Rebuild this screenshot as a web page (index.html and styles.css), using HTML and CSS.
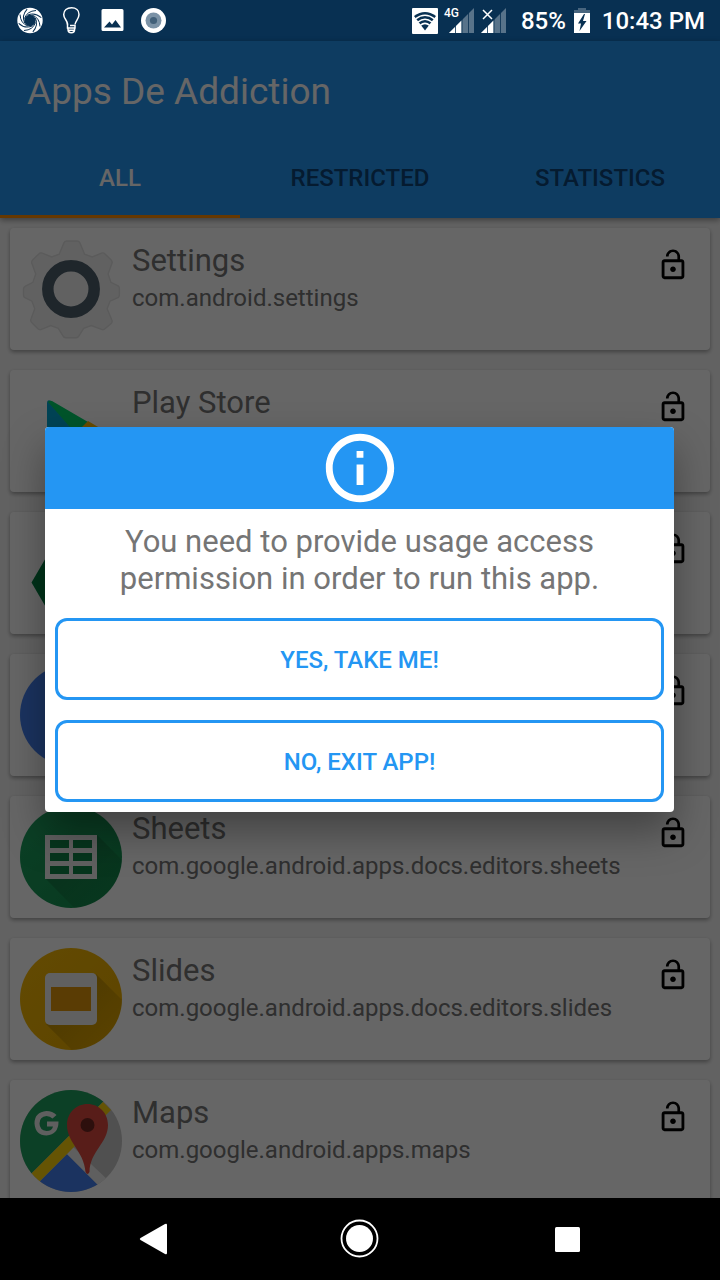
FILE: index.html
```html
<!DOCTYPE html>
<html lang="en">
<head>
<meta charset="utf-8">
<meta name="viewport" content="width=device-width, initial-scale=1">
<title>Apps De Addiction</title>
<link rel="stylesheet" href="styles.css">
</head>
<body>
<div class="phone">
  <div class="status">
    <div class="status-left">
      <svg class="status-icon" viewBox="0 0 28 28" aria-hidden="true">
        <circle cx="14" cy="13.500" r="9.200" fill="none" stroke="#fff" stroke-width="7"/>
        <g fill="none" stroke="#083052" stroke-width="1" transform="translate(0 -.5)">
          <path id="blade" d="M8.500 12Q11 4.500 20 4"/>
          <use href="#blade" transform="rotate(45 14 14)"/>
          <use href="#blade" transform="rotate(90 14 14)"/>
          <use href="#blade" transform="rotate(135 14 14)"/>
          <use href="#blade" transform="rotate(180 14 14)"/>
          <use href="#blade" transform="rotate(225 14 14)"/>
          <use href="#blade" transform="rotate(270 14 14)"/>
          <use href="#blade" transform="rotate(315 14 14)"/>
        </g>
      </svg>
      <svg class="status-icon" viewBox="0 0 28 28" aria-hidden="true">
        <path d="M10.500 17.500C10.500 13 6.700 12 6.700 7.500C6.700 3 10 .8 14.500 .8S22 3.500 22 7.500C22 12 18.500 13.500 18 17.500" fill="none" stroke="#fff" stroke-width="1.500"/>
        <path d="M10.500 16.500V21H18V18.500H13M11 21v1.500q0 3.200 3.300 3.200t3.300-3.200V21M11 23.300h6.500" fill="none" stroke="#fff" stroke-width="1.500"/>
      </svg>
      <svg class="status-icon" viewBox="0 0 28 28" aria-hidden="true">
        <path fill="#fff" fill-rule="evenodd" d="M5 2h19q1.500 0 1.500 1.500v19q0 1.500-1.500 1.500H5q-1.500 0-1.500-1.500v-19Q3.500 2 5 2zM6 20.500h17l-5.500-7.500-3.500 4.500-2.500-3z"/>
      </svg>
      <svg class="status-icon" viewBox="0 0 28 28" aria-hidden="true">
        <circle cx="14.500" cy="13.500" r="12.500" fill="#fff"/>
        <circle cx="14.500" cy="13.500" r="8" fill="#7b92a6"/>
        <circle cx="14.500" cy="13.500" r="3.600" fill="#426079"/>
      </svg>
    </div>
    <div class="status-right">
      <svg class="wifi" viewBox="0 0 26 26" aria-hidden="true">
        <rect width="26" height="26" rx="1" fill="#fff"/>
        <path d="M2 8Q13 0 24 8L13 22.500z" fill="#083052"/>
        <path d="M3.500 10.800Q13 3.500 22.500 10.800M6 14Q13 8.500 20 14M8.500 17.200Q13 13.500 17.500 17.200" fill="none" stroke="#fff" stroke-width="1.500"/>
      </svg>
      <span class="signal signal-main">
        <svg viewBox="0 0 26 26" aria-hidden="true"><path d="M0 25L25 0V25z" fill="#58738a"/><path d="M0 25L12.500 12.500V25z" fill="#fff"/><path d="M6.500 17v8M13 10v15M19.500 5v20" stroke="#083052" stroke-width=".8"/></svg>
        <span class="signal-type">4G</span>
      </span>
      <span class="signal">
        <svg viewBox="0 0 26 26" aria-hidden="true"><path d="M0 25L25 0V25z" fill="#58738a"/><path d="M0 25L12.500 12.500V25z" fill="#fff"/><path d="M6.500 17v8M13 10v15M19.500 5v20" stroke="#083052" stroke-width=".8"/><path d="M2 2l9 9M11 2l-9 9" stroke="#fff" stroke-width="1.500"/></svg>
      </span>
      <span class="percent">85%</span>
      <svg class="battery" viewBox="0 0 16 26" aria-hidden="true">
        <path d="M4 0h8v2h4v4H0V2h4z" fill="#48657e"/>
        <path d="M0 5h16v20H0z" fill="#fff"/>
        <path d="M10 6L4 15.500h3L5.500 23 12.500 13H9l2-7z" fill="#083052"/>
      </svg>
      <span class="clock">10:43 PM</span>
    </div>
  </div>

  <main class="screen">
    <header class="appbar">
      <h1 class="app-title">Apps De Addiction</h1>
      <div class="tabs" role="tablist">
        <button class="tab tab-active" role="tab" aria-selected="true">ALL</button>
        <button class="tab" role="tab" aria-selected="false">RESTRICTED</button>
        <button class="tab" role="tab" aria-selected="false">STATISTICS</button>
      </div>
    </header>

    <ul class="apps">
      <li class="card">
        <svg class="app-icon" viewBox="0 0 102 102" aria-hidden="true">
          <g transform="translate(3.500 3) scale(.94)">
            <path d="M45 0h12q2 0 3 2l5 12 8 3 10-4q2-1 4 1l6 6q2 2 1 4l-4 11 3 9 8 4q1 1 1 3v6q0 2-1 3l-9 4-3 8 5 12q1 2-1 4l-6 5q-2 2-4 1l-11-4-8 3-5 8q-1 2-3 2H45q-2 0-3-2l-5-8-8-3-10 4q-2 1-4-1l-6-6q-2-2-1-4l4-11-3-8-8-4q-1-1-1-3v-6q0-2 2-3l8-4 3-9-4-11q-1-2 1-4l6-6q2-2 4-1l10 4 8-3 5-12q1-2 3-2z" fill="#f3f3f3" stroke="#e3e3e3" stroke-width="1.500"/>
          </g>
          <circle cx="51" cy="51" r="23.200" fill="#f3f3f3" stroke="#4f606d" stroke-width="11.500"/>
        </svg>
        <div class="info"><h2 class="name">Settings</h2><p class="package">com.android.settings</p></div>
        <button class="lock" aria-label="Restrict"><svg viewBox="0 0 24 24"><path id="lock-shape" d="M12 17c1.100 0 2-.9 2-2s-.9-2-2-2-2 .9-2 2 .9 2 2 2zm6-9h-1V6c0-2.760-2.240-5-5-5S7 3.240 7 6h1.900c0-1.710 1.390-3.100 3.100-3.100 1.710 0 3.100 1.390 3.100 3.100v2H6c-1.100 0-2 .9-2 2v10c0 1.100.9 2 2 2h12c1.100 0 2-.9 2-2V10c0-1.100-.9-2-2-2zm0 12H6V10h12v10z"/></svg></button>
      </li>
      <li class="card">
        <svg class="app-icon" viewBox="0 0 102 102" aria-hidden="true">
          <path d="M27 23q0-4 4-2L57 47 27 88z" fill="#00a9d4"/>
          <path d="M28 22q1-2 4-1L68 42 56 54z" fill="#00d26a"/>
          <path d="M68 41l22 13-22 13-12-14z" fill="#ffbc00"/>
          <path d="M27 86l29-33 12 14-37 21z" fill="#f04040"/>
        </svg>
        <div class="info"><h2 class="name">Play Store</h2></div>
        <button class="lock" aria-label="Restrict"><svg viewBox="0 0 24 24"><use href="#lock-shape"/></svg></button>
      </li>
      <li class="card">
        <svg class="app-icon" viewBox="0 0 102 102" aria-hidden="true">
          <path d="M11.500 60.500L31 27h40l20 33.500L71 94H31z" fill="#007f43"/>
        </svg>
        <div class="info"></div>
        <button class="lock" aria-label="Restrict"><svg viewBox="0 0 24 24"><use href="#lock-shape"/></svg></button>
      </li>
      <li class="card">
        <svg class="app-icon" viewBox="0 0 102 102" aria-hidden="true">
          <circle cx="51" cy="51" r="51" fill="#4580ef"/>
        </svg>
        <div class="info"></div>
        <button class="lock" aria-label="Restrict"><svg viewBox="0 0 24 24"><use href="#lock-shape"/></svg></button>
      </li>
      <li class="card">
        <svg class="app-icon" viewBox="0 0 102 102" aria-hidden="true">
          <defs>
            <linearGradient id="sheen-green" x1="0" y1="0" x2="1" y2="1"><stop offset="0" stop-color="#1fa160"/><stop offset="1" stop-color="#128f4e"/></linearGradient>
            <linearGradient id="sheen-yellow" x1="0" y1="0" x2="1" y2="1"><stop offset="0" stop-color="#f6b906"/><stop offset="1" stop-color="#e9ab00"/></linearGradient>
            <linearGradient id="fade" x1="0" y1="0" x2="1" y2="1"><stop offset=".3" stop-color="#000" stop-opacity=".16"/><stop offset=".9" stop-color="#000" stop-opacity="0"/></linearGradient>
            <clipPath id="disc"><circle cx="51" cy="51" r="51"/></clipPath>
          </defs>
          <circle cx="51" cy="51" r="51" fill="url(#sheen-green)"/>
          <path d="M77 29l40 40v48H69L26 73z" fill="url(#fade)" clip-path="url(#disc)"/>
          <path d="M25 29h52v44H25z" fill="#f1f1f1"/>
          <path d="M30 34h19v8H30zM53 34h19v8H53zM30 47h19v8H30zM53 47h19v8H53zM30 60h19v8H30zM53 60h19v8H53z" fill="#11854a"/>
        </svg>
        <div class="info"><h2 class="name">Sheets</h2><p class="package">com.google.android.apps.docs.editors.sheets</p></div>
        <button class="lock" aria-label="Restrict"><svg viewBox="0 0 24 24"><use href="#lock-shape"/></svg></button>
      </li>
      <li class="card">
        <svg class="app-icon" viewBox="0 0 102 102" aria-hidden="true">
          <circle cx="51" cy="51" r="51" fill="url(#sheen-yellow)"/>
          <path d="M76 26l41 41v50H67L26 76z" fill="url(#fade)" clip-path="url(#disc)"/>
          <rect x="25" y="25" width="52" height="52" rx="5" fill="#f1f1f1"/>
          <path d="M31 39h40v24H31z" fill="#e0960c"/>
        </svg>
        <div class="info"><h2 class="name">Slides</h2><p class="package">com.google.android.apps.docs.editors.slides</p></div>
        <button class="lock" aria-label="Restrict"><svg viewBox="0 0 24 24"><use href="#lock-shape"/></svg></button>
      </li>
      <li class="card">
        <svg class="app-icon" viewBox="0 0 102 102" aria-hidden="true">
          <g clip-path="url(#disc)">
            <path d="M0 0h102v102H0z" fill="#c8c8c8"/>
            <path d="M0 0h95L0 95z" fill="#1fa160"/>
            <path d="M47 64L88 105H6z" fill="#4580ef"/>
            <path d="M53 57L47 64 82 99l8-7z" fill="#eee"/>
            <path d="M8 87L83 12l8 8-75 75z" fill="#fdd20a"/>
          </g>
          <path d="M38.500 31.500H27v5h6q-1 4.500-6.500 4.500-7-1-7-7.500 0-7 7-7.500 3.500 0 6 2.500l4-3.500q-4-4-10-4-12 1-12 12.500 1 12 12 12 12-1 12-14z" fill="#eee"/>
          <path d="M67.500 14C79 14 88 23 88 35c0 18-18 26-18.500 47q-2 4-4 0C64 61 47 53 47 35c0-12 9-21 20.500-21z" fill="#dc4a3f"/>
          <circle cx="67.500" cy="35" r="7" fill="#702622"/>
        </svg>
        <div class="info"><h2 class="name">Maps</h2><p class="package">com.google.android.apps.maps</p></div>
        <button class="lock" aria-label="Restrict"><svg viewBox="0 0 24 24"><use href="#lock-shape"/></svg></button>
      </li>
    </ul>

    <div class="backdrop">
      <section class="dialog" role="dialog" aria-modal="true" aria-labelledby="message">
        <div class="dialog-head">
          <svg class="info-icon" viewBox="0 0 24 24" aria-hidden="true"><path fill="#fff" d="M11 7h2v2h-2zm0 4h2v6h-2zm1-9C6.480 2 2 6.480 2 12s4.480 10 10 10 10-4.480 10-10S17.520 2 12 2zm0 18c-4.410 0-8-3.590-8-8s3.590-8 8-8 8 3.590 8 8-3.590 8-8 8z"/></svg>
        </div>
        <p class="message" id="message">You need to provide usage access permission in order to run this app.</p>
        <div class="actions">
          <button class="action">YES, TAKE ME!</button>
          <button class="action">NO, EXIT APP!</button>
        </div>
      </section>
    </div>
  </main>

  <nav class="navbar" aria-label="System">
    <button class="nav-button" aria-label="Back"><svg viewBox="0 0 40 40"><path d="M7.500 19L32 5q2-1 2 1v28q0 2-2 1L7.500 21q-1.500-1 0-2z" fill="#fff"/></svg></button>
    <button class="nav-button" aria-label="Home"><svg viewBox="0 0 40 40"><circle cx="19.500" cy="19.500" r="18" fill="none" stroke="#fff" stroke-width="1.800"/><circle cx="19.500" cy="19.500" r="13.500" fill="#fff"/></svg></button>
    <button class="nav-button" aria-label="Recent apps"><svg viewBox="0 0 40 40"><rect x="8" y="8" width="25" height="25" rx="1.500" fill="#fff"/></svg></button>
  </nav>
</div>
</body>
</html>
```
FILE: styles.css
```css
* { box-sizing: border-box; }

body {
  margin: 0;
  font-family: Roboto, "Noto Sans", sans-serif;
  background: #000;
}

h1, h2, p, ul { margin: 0; padding: 0; font-weight: 400; }

button {
  margin: 0;
  padding: 0;
  border: 0;
  background: none;
  font: inherit;
  color: inherit;
}

svg { display: block; }

.phone {
  display: flex;
  flex-direction: column;
  height: 100vh;
}

/* System status bar */
.status {
  flex: none;
  display: flex;
  justify-content: space-between;
  align-items: center;
  height: 41px;
  padding: 0 15px 0 16px;
  background: #083052;
  color: #fff;
  font-size: 24px;
  font-weight: 500;
}

.status-left { display: flex; gap: 13px; }
.status-icon { width: 28px; height: 28px; }
.status-right { display: flex; align-items: center; }
.wifi { width: 26px; height: 26px; margin-right: 11px; }
.signal { position: relative; width: 26px; margin-right: 14px; }
.signal-main { margin-right: 6px; }

.signal-type {
  position: absolute;
  left: -5px;
  top: -1px;
  font-size: 12px;
  line-height: 12px;
}

.percent { margin-right: 8px; }
.battery { width: 16px; height: 26px; margin-right: 12px; }
.percent, .clock { padding-top: 1px; }

/* App screen */
.screen {
  position: relative;
  flex: 1;
  min-height: 0;
  display: flex;
  flex-direction: column;
  background: #f6f6f6;
}

.appbar {
  position: relative;
  flex: none;
  background: #2496f3;
  box-shadow: 0 2px 6px rgba(0, 0, 0, .4);
}

.app-title {
  padding: 4px 27px 0;
  font-size: 37px;
  line-height: 93px;
  color: #fff;
}

.tabs { display: grid; grid-template-columns: repeat(3, 1fr); }

.tab {
  height: 80px;
  border-top: 3px solid transparent;
  border-bottom: 3px solid transparent;
  font-size: 24px;
  font-weight: 500;
  color: #0d4578;
}

.tab-active { color: #fff; border-bottom-color: #ff8c00; }

.apps {
  flex: 1;
  min-height: 0;
  overflow: hidden;
  display: flex;
  flex-direction: column;
  gap: 20px;
  padding: 10px;
  list-style: none;
}

.card {
  flex: none;
  display: flex;
  gap: 10px;
  padding: 10px;
  border-radius: 4px;
  background: #fff;
  box-shadow: 0 2px 4px rgba(0, 0, 0, .35);
}

.app-icon { flex: none; width: 102px; height: 102px; }
.info { flex: 1; min-width: 0; padding-top: 4px; color: #757575; }
.name { font-size: 31px; line-height: 37px; }
.package { font-size: 24px; line-height: 38px; }
.lock { align-self: flex-start; padding: 10px; }
.lock svg { width: 34px; height: 34px; }

/* Permission dialog */
.backdrop {
  position: absolute;
  inset: 0;
  display: flex;
  align-items: center;
  padding: 0 46px 0 45px;
  background: rgba(0, 0, 0, .6);
}

.dialog {
  flex: 1;
  overflow: hidden;
  border-radius: 4px;
  background: #fff;
  box-shadow: 0 20px 40px rgba(0, 0, 0, .35);
}

.dialog-head {
  display: flex;
  justify-content: center;
  background: #2496f3;
}

.info-icon { width: 82px; height: 82px; }

.message {
  padding: 14px 60px 21px;
  font-size: 31px;
  line-height: 37px;
  text-align: center;
  color: #757575;
}

.actions {
  display: flex;
  flex-direction: column;
  gap: 20px;
  padding: 0 10px 10px;
}

.action {
  height: 82px;
  padding-top: 2px;
  border: 3px solid #2496f3;
  border-radius: 12px;
  font-size: 24px;
  font-weight: 500;
  color: #2496f3;
}

/* System navigation */
.navbar {
  flex: none;
  display: flex;
  justify-content: space-between;
  align-items: center;
  height: 82px;
  padding: 0 133px;
  background: #000;
}

.nav-button svg { width: 40px; height: 40px; }
```
